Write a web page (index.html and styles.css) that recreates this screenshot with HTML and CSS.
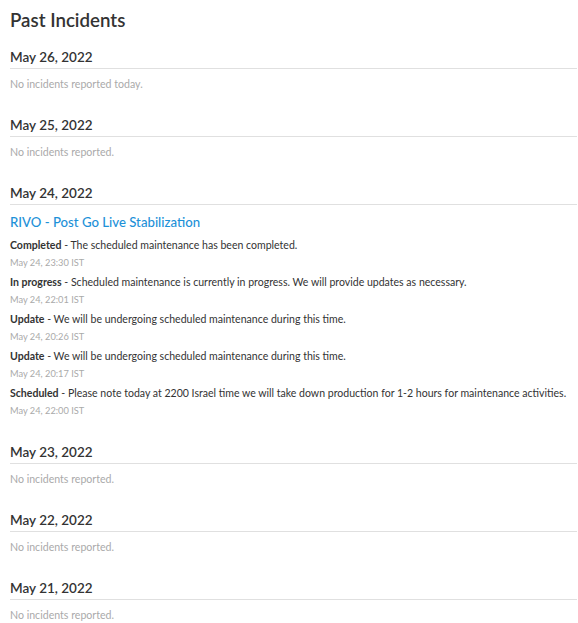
FILE: index.html
```html
<!DOCTYPE html>
<html lang="en">
<head>
    <meta charset="UTF-8">
    <title>Past Incidents</title>
    <link rel="stylesheet" href="styles.css">
</head>
<body>
    <main class="incidents-list">
        <h1 class="page-title">Past Incidents</h1>

        <section class="status-day">
            <h3 class="date">May 26, 2022</h3>
            <p class="no-incidents">No incidents reported today.</p>
        </section>

        <section class="status-day">
            <h3 class="date">May 25, 2022</h3>
            <p class="no-incidents">No incidents reported.</p>
        </section>

        <section class="status-day">
            <h3 class="date">May 24, 2022</h3>
            <div class="incident">
                <a class="incident-title" href="#">RIVO - Post Go Live Stabilization</a>
                <div class="update">
                    <p class="update-body"><strong>Completed</strong> - The scheduled maintenance has been completed.</p>
                    <small class="update-time">May 24, 23:30 IST</small>
                </div>
                <div class="update">
                    <p class="update-body"><strong>In progress</strong> - Scheduled maintenance is currently in progress. We will provide updates as necessary.</p>
                    <small class="update-time">May 24, 22:01 IST</small>
                </div>
                <div class="update">
                    <p class="update-body"><strong>Update</strong> - We will be undergoing scheduled maintenance during this time.</p>
                    <small class="update-time">May 24, 20:26 IST</small>
                </div>
                <div class="update">
                    <p class="update-body"><strong>Update</strong> - We will be undergoing scheduled maintenance during this time.</p>
                    <small class="update-time">May 24, 20:17 IST</small>
                </div>
                <div class="update">
                    <p class="update-body"><strong>Scheduled</strong> - Please note today at 2200 Israel time we will take down production for 1-2 hours for maintenance activities.</p>
                    <small class="update-time">May 24, 22:00 IST</small>
                </div>
            </div>
        </section>

        <section class="status-day">
            <h3 class="date">May 23, 2022</h3>
            <p class="no-incidents">No incidents reported.</p>
        </section>

        <section class="status-day">
            <h3 class="date">May 22, 2022</h3>
            <p class="no-incidents">No incidents reported.</p>
        </section>

        <section class="status-day">
            <h3 class="date">May 21, 2022</h3>
            <p class="no-incidents">No incidents reported.</p>
        </section>
    </main>
</body>
</html>
```

FILE: styles.css
```css
* {
    box-sizing: border-box;
    margin: 0;
    padding: 0;
}

body {
    font-family: Lato, "Liberation Sans", Arial, sans-serif;
    color: #333;
    background-color: #fff;
}

.incidents-list {
    padding: 8px 1px 0 10px;
}

.page-title {
    font-size: 18.7px;
    line-height: 24px;
    font-weight: 600;
    margin-bottom: 16px;
}

.status-day {
    display: flex;
    flex-direction: column;
    margin-bottom: 25px;
}

.date {
    font-size: 13.5px;
    line-height: 18px;
    font-weight: 600;
    padding-bottom: 2px;
    border-bottom: 1px solid #e0e0e0;
}

.no-incidents {
    margin-top: 8px;
    font-size: 10.6px;
    line-height: 14px;
    color: #aaa;
}

.incident {
    display: flex;
    flex-direction: column;
    padding-top: 8px;
    margin-bottom: 1px;
}

.incident-title {
    font-size: 13.2px;
    line-height: 18px;
    font-weight: 500;
    color: #1d91d8;
    text-decoration: none;
    margin-bottom: 1px;
}

.update {
    display: flex;
    flex-direction: column;
    gap: 5px;
    margin-top: 6px;
}

.update-body {
    font-size: 10.55px;
    line-height: 14px;
    white-space: nowrap;
}

.update-body strong {
    font-weight: 700;
}

.update-time {
    font-size: 9.25px;
    line-height: 12px;
    color: #aaa;
}
```
